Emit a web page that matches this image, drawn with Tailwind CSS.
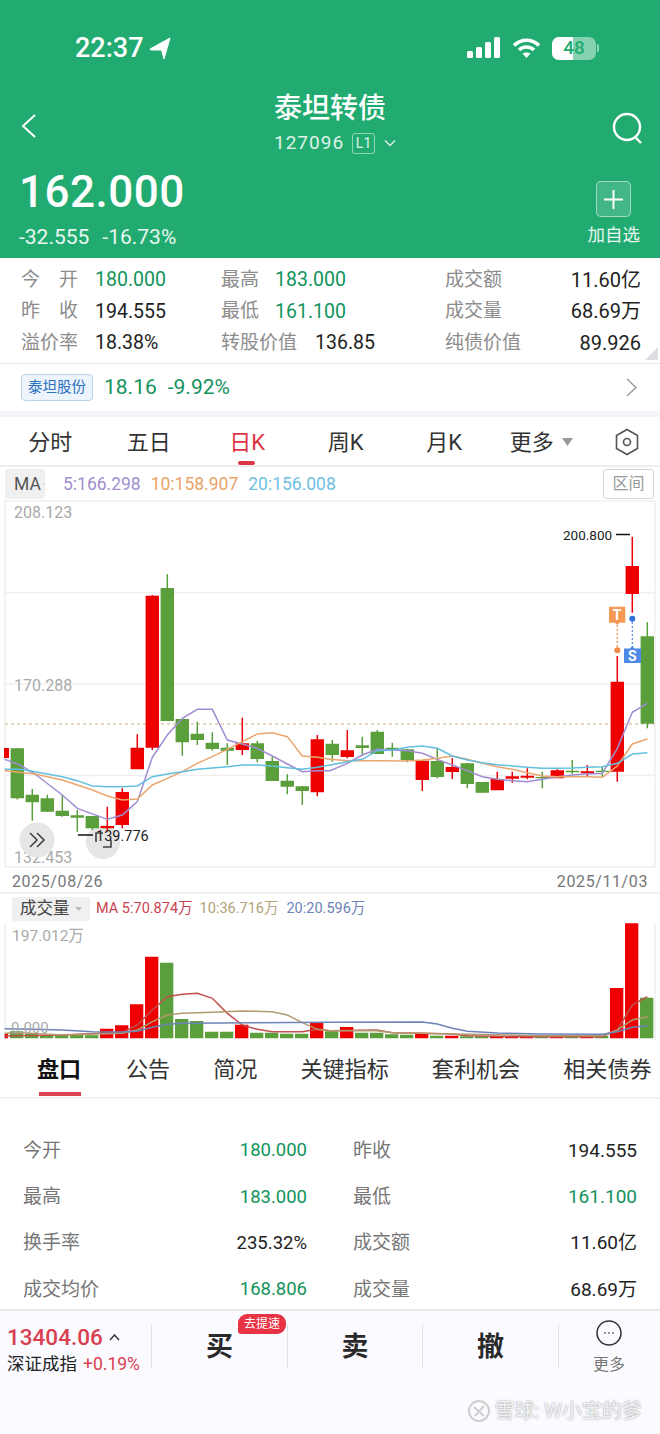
<!doctype html>
<html lang="zh">
<head>
<meta charset="utf-8">
<title>泰坦转债</title>
<script src="https://cdn.jsdelivr.net/npm/@tailwindcss/browser@4"></script>
</head>
<body class="bg-white">
<div class="relative w-[660px] h-[1434px] overflow-hidden flex flex-col bg-white text-[#222] font-['Roboto','Noto_Sans_CJK_SC',sans-serif]">

  <!-- green header -->
  <header class="h-[258px] shrink-0 bg-[#21ab70] text-white flex flex-col">
    <div class="h-[97px] shrink-0 flex items-start justify-between pl-[75px] pr-[61px] pt-[33px]">
      <div class="flex items-center gap-[5px]">
        <span class="text-[27px] leading-[31px] font-medium">22:37</span>
        <svg width="22" height="23" viewBox="0 0 22 23"><path d="M1 12 21 1 15 22 12.500 13 2 13z" fill="#fff" stroke="#fff" stroke-width="1" stroke-linejoin="round"/></svg>
      </div>
      <div class="flex items-center gap-[11px] h-[30px] pl-[1px]">
        <svg width="34" height="22" viewBox="0 0 34 22" fill="#fff"><rect x="0" y="14" width="6" height="7" rx="1.500"/><rect x="9" y="10" width="6" height="11" rx="1.500"/><rect x="18" y="5" width="6" height="16" rx="1.500"/><rect x="27" y="0" width="6" height="21" rx="1.500"/></svg>
        <svg width="29" height="22" viewBox="0 0 29 22" fill="none" stroke="#fff" stroke-width="3.600"><path d="M2 8.500C9 1.500 20 1.500 27 8.500"/><path d="M7 13C11 9 18 9 22 13"/><path d="M14.500 21 10.500 16.500C12.500 15 16.500 15 18.500 16.500z" fill="#fff" stroke="none"/></svg>
        <div class="relative w-[44px] h-[23px] rounded-[7px] bg-white/45 overflow-hidden flex">
          <div class="w-[21px] h-full bg-white"></div>
          <span class="absolute inset-0 flex items-center justify-center text-[19px] font-medium text-[#21ab70]">48</span>
        </div>
        <div class="-ml-[10px] w-[2px] h-[8px] rounded-r bg-white/50"></div>
      </div>
    </div>
    <div class="h-[62px] shrink-0 relative flex flex-col items-start pl-[274px] -mt-[6px]">
      <div class="text-[28px] leading-[36px] font-medium">泰坦转债</div>
      <div class="flex items-center h-[26px] mt-[3px]">
        <span class="text-[19px] tracking-[1px] text-white/85">127096</span>
        <span class="ml-[8px] w-[23px] h-[21px] rounded-[3px] border border-white/50 text-[14px] leading-[19px] text-center text-white/85">L1</span>
        <svg class="ml-[9px]" width="12" height="8" viewBox="0 0 12 8" fill="none" stroke="#fff" stroke-opacity=".85" stroke-width="1.400"><path d="M1 1.500 6 6.500 11 1.500"/></svg>
      </div>
      <svg class="absolute left-[20px] top-[22px]" width="17" height="26" viewBox="0 0 17 26" fill="none" stroke="#fff" stroke-width="2"><path d="M15 2 3 13 15 24"/></svg>
      <svg class="absolute left-[612px] top-[21px]" width="31" height="33" viewBox="0 0 31 33" fill="none" stroke="#fff" stroke-width="2.400"><circle cx="15" cy="15" r="13"/><path d="M23 25 29 31"/></svg>
    </div>
    <div class="flex-1 flex justify-between pl-[19px] pr-[20px] mt-[11px]">
      <div class="flex flex-col">
        <div class="text-[44px] leading-[56px] font-medium tracking-[0.5px]">162.000</div>
        <div class="flex gap-[13px] text-[21px] leading-[24px] mt-[5px] text-white/90"><span>-32.555</span><span>-16.73%</span></div>
      </div>
      <div class="flex flex-col items-center pt-[17px]">
        <div class="w-[35px] h-[36px] rounded-[5px] border border-white/50 bg-white/15 flex items-center justify-center">
          <svg width="19" height="19" viewBox="0 0 19 19" stroke="#fff" stroke-width="2"><path d="M0 9.500H19M9.500 0V19"/></svg>
        </div>
        <div class="text-[17.500px] leading-[24px] mt-[6px] text-white/90">加自选</div>
      </div>
    </div>
  </header>

  <!-- quote summary -->
  <section class="relative h-[106px] shrink-0 border-b border-[#e8e8ec] pl-[21px] pr-[19px] pt-[6px] flex text-[#222]">
    <div class="w-[200px] flex flex-col">
      <div class="h-[31.500px] flex items-center"><span class="w-[74px] pr-[17px] flex justify-between text-[19px] text-[#8c8c8c]"><span>今</span><span>开</span></span><span class="text-[19.500px] text-[#12935c]">180.000</span></div>
      <div class="h-[31.500px] flex items-center"><span class="w-[74px] pr-[17px] flex justify-between text-[19px] text-[#8c8c8c]"><span>昨</span><span>收</span></span><span class="text-[19.500px]">194.555</span></div>
      <div class="h-[31.500px] flex items-center"><span class="w-[74px] text-[19px] text-[#8c8c8c]">溢价率</span><span class="text-[19.500px]">18.38%</span></div>
    </div>
    <div class="w-[224px] flex flex-col">
      <div class="h-[31.500px] flex items-center"><span class="w-[54px] text-[19px] text-[#8c8c8c]">最高</span><span class="text-[19.500px] text-[#12935c]">183.000</span></div>
      <div class="h-[31.500px] flex items-center"><span class="w-[54px] text-[19px] text-[#8c8c8c]">最低</span><span class="text-[19.500px] text-[#12935c]">161.100</span></div>
      <div class="h-[31.500px] flex items-center"><span class="w-[94px] text-[19px] text-[#8c8c8c]">转股价值</span><span class="text-[19.500px]">136.85</span></div>
    </div>
    <div class="flex-1 flex flex-col">
      <div class="h-[31.500px] flex items-center justify-between"><span class="text-[19px] text-[#8c8c8c]">成交额</span><span class="text-[20px]">11.60亿</span></div>
      <div class="h-[31.500px] flex items-center justify-between"><span class="text-[19px] text-[#8c8c8c]">成交量</span><span class="text-[20px]">68.69万</span></div>
      <div class="h-[31.500px] flex items-center justify-between"><span class="text-[19px] text-[#8c8c8c]">纯债价值</span><span class="text-[20px]">89.926</span></div>
    </div>
    <svg class="absolute right-[2px] bottom-[3px]" width="13" height="13" viewBox="0 0 13 13"><path d="M13 0V13H0z" fill="#dcdce2"/></svg>
  </section>

  <!-- related stock -->
  <section class="h-[47px] shrink-0 flex items-center pl-[21px] pr-[23px]">
    <span class="w-[72px] h-[27px] rounded-[4px] border border-[#bcd3ea] bg-[#edf4fb] text-[#2a70c0] text-[14.500px] leading-[25px] text-center">泰坦股份</span>
    <span class="ml-[11px] text-[21px] text-[#12935c]">18.16</span>
    <span class="ml-[11px] text-[21px] text-[#12935c]">-9.92%</span>
    <svg class="ml-auto" width="11" height="19" viewBox="0 0 11 19" fill="none" stroke="#9a9a9a" stroke-width="1.400"><path d="M1 1 10 9.500 1 18"/></svg>
  </section>
  <div class="h-[6px] shrink-0 bg-[#f5f5f9]"></div>

  <!-- period tabs -->
  <nav class="relative h-[50px] shrink-0 border-b-2 border-[#eeeeee] flex items-center pl-[1px] pt-[2px] text-[22px] text-[#333]">
    <span class="w-[98.500px] text-center">分时</span>
    <span class="w-[98.500px] text-center">五日</span>
    <span class="w-[98.500px] text-center text-[#dc3545]">日K</span>
    <span class="w-[98.500px] text-center">周K</span>
    <span class="w-[98.500px] text-center">月K</span>
    <span class="w-[98.500px] flex items-center justify-center gap-[8px] pr-[3px]">更多<svg width="11" height="8" viewBox="0 0 11 8"><path d="M0 0H11L5.500 8z" fill="#999"/></svg></span>
    <svg class="ml-[23px]" width="24" height="28" viewBox="0 0 24 28" fill="none" stroke="#555" stroke-width="1.600"><path d="M12 1.500 22.500 7.500V20.500L12 26.500 1.500 20.500V7.500z"/><circle cx="12" cy="14" r="3.500"/></svg>
    <span class="absolute left-[238px] bottom-0 w-[17px] h-[4px] rounded-full bg-[#dc3545]"></span>
  </nav>

  <!-- MA legend -->
  <div class="h-[33px] shrink-0 flex items-center pl-[5px] pr-[6px] pt-[1px] text-[17.500px]">
    <span class="w-[40px] h-[30px] bg-[#f0f0f0] rounded-[2px] flex items-center pl-[9px] gap-[2px] text-[#555]">MA<svg width="7" height="4" viewBox="0 0 7 4"><path d="M0 0H7L3.500 4z" fill="#aaa"/></svg></span>
    <span class="ml-[18px] text-[#a18fd0]">5:166.298</span>
    <span class="ml-[10px] text-[#e9a368]">10:158.907</span>
    <span class="ml-[10px] text-[#6fbfe0]">20:156.008</span>
    <span class="ml-auto w-[51px] h-[30px] border border-[#d5d5d5] rounded-[3px] text-[16px] leading-[28px] text-center text-[#999]">区间</span>
  </div>

  <!-- K-line chart -->
  <svg class="block shrink-0" width="660" height="368" viewBox="0 500 660 368">
    <g stroke="#efefef" stroke-width="1.500" fill="none">
      <path d="M5 501H655M5 592.500H655M5 684H655M5 775.500H655M5 867H655"/>
      <path d="M5 501V867M655 501V867"/>
    </g>
    <path d="M5 724H655" stroke="#c9b28a" stroke-width="1.200" stroke-dasharray="3 3"/>
    <g font-size="16" fill="#aaaaaa">
      <text x="14" y="518">208.123</text>
      <text x="14" y="691">170.288</text>
      <text x="14" y="863">132.453</text>
    </g>
    <circle cx="37" cy="840" r="17.500" fill="#e6e6e6"/>
    <circle cx="103" cy="842" r="17" fill="#e6e6e6"/>
    <!-- wicks -->
    <path stroke="#e8000a" stroke-width="1.500" fill="none" d="M107.300 806.700V831.700M122.300 788.300V828.300M137.300 734.300V769M152.300 595V750M242.300 717.700V755M317.300 735V796.300M347.300 730V758.300M422.300 760V791M452.300 758.300V779M497.300 771.700V790M512.300 771.700V782.700M527.300 768.300V779.300M557.300 769.300V778M587.300 765V776M617.300 656V781.700M632.300 536.700V612.700"/>
    <path stroke="#5b9e3c" stroke-width="1.500" fill="none" d="M17.300 748V799.500M32.300 789V820.700M47.300 794.700V812M62.300 795.300V816.700M77.300 810V831.700M92.300 816V830M167.300 574.300V588M182.300 719V755.700M197.300 721.700V745M212.300 732.300V750.700M227.300 743.300V765M257.300 740.700V762.300M272.300 756.700V781M287.300 774.300V794.300M302.300 786V805M332.300 740V761.700M362.300 736.700V755M377.300 730V754M392.300 742.700V756.700M407.300 749V762.300M437.300 748.300V778.300M467.300 763V788.300M482.300 782V793M542.300 771.700V788.300M572.300 760V774M602.300 766.700V776.700M647.300 622.300V728.300"/>
    <!-- bodies -->
    <path fill="#ee0000" d="M4 748h5V758h-5zM100.600 826h13.400V828.300h-13.400zM115.600 792h13.400V825h-13.400zM130.600 747.700h13.400V769.300h-13.400zM145.600 595.700h13.400V747.700h-13.400zM235.600 743.300h13.400V750h-13.400zM310.600 739.300h13.400V792.300h-13.400zM340.600 750.300h13.400V757h-13.400zM415.600 760.700h13.400V780h-13.400zM445.600 767h13.400V772h-13.400zM490.600 779h13.400V790.300h-13.400zM505.600 776.300h13.400V778.700h-13.400zM520.600 775.700h13.400V777.700h-13.400zM550.600 770.300h13.400V778.300h-13.400zM580.600 771.300h13.400V773.300h-13.400zM610.600 681.700h13.400V771.700h-13.400zM625.600 566h13.400V594h-13.400z"/>
    <path fill="#5b9e3c" d="M10.600 748.300h13.400V798.300h-13.400zM25.600 794.700h13.400V802.300h-13.400zM40.600 798.300h13.400V811.700h-13.400zM55.600 810.700h13.400V816h-13.400zM70.600 815.300h13.400V817.700h-13.400zM85.600 816h13.400V828.300h-13.400zM160.600 588h13.400V721h-13.400zM175.600 719h13.400V742.300h-13.400zM190.600 733.700h13.400V740h-13.400zM205.600 742.700h13.400V749h-13.400zM220.600 747.700h13.400V750.700h-13.400zM250.600 743.300h13.400V759h-13.400zM265.600 761h13.400V781h-13.400zM280.600 780.700h13.400V786.700h-13.400zM295.600 786.300h13.400V791h-13.400zM325.600 743.700h13.400V755h-13.400zM355.600 745.300h13.400V748h-13.400zM370.600 731.700h13.400V754h-13.400zM385.600 747.700h13.400V750.700h-13.400zM400.600 749.300h13.400V760h-13.400zM430.600 761h13.400V777h-13.400zM460.600 763.300h13.400V784h-13.400zM475.600 782h13.400V792.700h-13.400zM535.600 777h13.400V778.300h-13.400zM565.600 770.700h13.400V772.300h-13.400zM595.600 770.700h13.400V772h-13.400zM640.600 636.300h13.400V723.700h-13.400z"/>
    <!-- moving averages -->
    <g transform="translate(0 500) scale(.33333)" fill="none" stroke-width="4.500">
      <polyline stroke="#a08cd2" points="14,778 60,795 105,822 187,885 232,925 322,958 367,945 412,905 457,772 502,705 547,655 592,628 637,628 682,720 727,732 772,745 817,768 862,792 907,815 952,812 990,812 1042,790 1087,765 1132,748 1177,750 1222,752 1267,760 1312,778 1357,795 1402,812 1447,830 1492,838 1537,842 1582,845 1627,838 1672,830 1717,825 1762,822 1807,820 1852,745 1897,637 1942,610"/>
      <polyline stroke="#eba66e" points="14,812 105,822 187,840 277,870 322,888 367,900 412,897 457,855 502,835 547,815 592,790 637,770 682,748 727,725 772,702 817,698 862,710 907,768 952,772 990,778 1042,782 1132,782 1222,783 1267,780 1312,775 1357,768 1402,778 1447,790 1492,800 1537,808 1582,818 1627,828 1672,830 1717,830 1762,830 1807,832 1852,798 1897,732 1942,717"/>
      <polyline stroke="#62bfdd" points="14,808 60,808 105,815 187,830 232,842 277,858 322,860 367,860 412,858 457,830 502,822 547,815 592,808 637,804 682,800 727,795 772,795 817,798 862,803 907,808 952,802 990,795 1042,785 1087,778 1132,752 1177,750 1222,742 1267,738 1312,745 1357,768 1402,780 1447,788 1492,794 1537,798 1582,802 1627,805 1672,805 1717,804 1762,802 1807,800 1852,790 1897,762 1942,758"/>
    </g>
    <!-- high / low labels -->
    <text x="563" y="540" font-size="13.500" fill="#222">200.800</text>
    <path d="M616 534.500H630" stroke="#111" stroke-width="1.500"/>
    <path d="M78 835H93" stroke="#111" stroke-width="1.500"/>
    <text x="96" y="841" font-size="14.500" fill="#222">139.776</text>
    <path d="M30 833 37 840 30 847M37 833 44 840 37 847" fill="none" stroke="#444" stroke-width="1.600"/>
    <path d="M96 842V833H103M103 847H111V840" fill="none" stroke="#444" stroke-width="1.600"/>
    <!-- T / S trade marks -->
    <path d="M617.300 625V650" stroke="#ee9a58" stroke-width="1.300" stroke-dasharray="2 2"/>
    <path d="M609 606.700H625.300V622.700H619.500L617.300 625 615 622.700H609z" fill="#f59a55"/>
    <text x="617.200" y="620" font-size="14" font-weight="700" fill="#fff" text-anchor="middle">T</text>
    <circle cx="617.300" cy="650.300" r="3" fill="#ee8a44"/>
    <path d="M632.300 622V645" stroke="#5b8fe0" stroke-width="1.300" stroke-dasharray="2 2"/>
    <path d="M624 648.500H630L632.300 645.500 634.500 648.500H641V663H624z" fill="#4f8ae8"/>
    <text x="632.300" y="661" font-size="14" font-weight="700" fill="#fff" text-anchor="middle">S</text>
    <circle cx="632.300" cy="618.700" r="3" fill="#2f6fd8"/>
  </svg>

  <!-- date axis -->
  <div class="h-[26px] shrink-0 flex items-center justify-between pl-[12px] pr-[12px] pt-[3px] border-b-2 border-[#f2f2f2] text-[16px] tracking-[0.6px] text-[#777]">
    <span>2025/08/26</span><span>2025/11/03</span>
  </div>

  <!-- volume legend -->
  <div class="h-[29px] shrink-0 flex items-center pl-[12px] pt-[1px] text-[14.500px]">
    <span class="w-[78px] h-[24px] bg-[#f0f0f0] rounded-[2px] flex items-center pl-[8px] gap-[5px] text-[16.500px] text-[#444]">成交量<svg width="7" height="4" viewBox="0 0 7 4"><path d="M0 0H7L3.500 4z" fill="#bbb"/></svg></span>
    <span class="ml-[6px] text-[#c8434f]">MA 5:70.874万</span>
    <span class="ml-[7px] text-[#b3a27a]">10:36.716万</span>
    <span class="ml-[8px] text-[#6d84b8]">20:20.596万</span>
  </div>

  <!-- volume chart -->
  <svg class="block shrink-0" width="660" height="117" viewBox="0 923 660 117">
    <path d="M5 923V1040M655 923V1040" stroke="#efefef" stroke-width="1.500"/>
    <text x="12" y="941" font-size="15.500" fill="#aaaaaa">197.012万</text>
    <g transform="translate(0 870) scale(.33333)">
      <path fill="#ee0000" d="M14 492h10V505h-10zM300 476h40V505h-40zM345 466h40V505h-40zM390 403h40V505h-40zM435 260h40V505h-40zM705 464h40V505h-40zM930 459h40V505h-40zM1020 471h40V505h-40zM1245 492h40V505h-40zM1335 497h40V505h-40zM1470 498h40V505h-40zM1515 499h40V505h-40zM1560 499h40V505h-40zM1650 499h40V505h-40zM1740 499h40V505h-40zM1830 354h40V505h-40zM1875 160h40V505h-40z"/>
      <path fill="#5b9e3c" d="M30 484h40V505h-40zM75 492h40V505h-40zM120 495h40V505h-40zM165 492h40V505h-40zM210 492h40V505h-40zM255 496h40V505h-40zM480 278h40V505h-40zM525 447h40V505h-40zM570 453h40V505h-40zM615 485h40V505h-40zM660 485h40V505h-40zM750 488h40V505h-40zM795 488h40V505h-40zM840 491h40V505h-40zM885 491h40V505h-40zM975 484h40V505h-40zM1065 488h40V505h-40zM1110 488h40V505h-40zM1155 493h40V505h-40zM1200 494h40V505h-40zM1290 497h40V505h-40zM1380 499h40V505h-40zM1425 499h40V505h-40zM1605 498h40V505h-40zM1695 499h40V505h-40zM1785 498h40V505h-40zM1920 383h40V505h-40z"/>
      <g fill="none" stroke-width="4.500">
        <polyline stroke="#c0504e" points="14,498 187,495 300,490 367,488 412,465 457,420 502,380 547,373 592,370 637,385 682,430 727,465 772,478 817,485 862,485 907,485 952,478 990,482 1130,480 1177,488 1267,490 1357,492 1402,497 1492,499 1627,500 1807,500 1852,480 1897,405 1942,380"/>
        <polyline stroke="#b39a6e" points="14,490 60,488 187,495 367,490 412,480 457,455 502,435 547,430 637,427 727,423 817,425 862,435 907,458 952,478 990,482 1130,482 1177,488 1402,493 1627,497 1807,497 1852,480 1897,450 1942,440"/>
        <polyline stroke="#6d84b8" points="14,476 100,478 187,480 277,485 367,486 412,484 457,472 502,463 547,460 990,457 1267,456 1312,462 1357,475 1402,484 1492,489 1627,492 1807,493 1852,485 1897,472 1942,467"/>
      </g>
    </g>
    <text x="11" y="1033" font-size="15" fill="#aaaaaa">0.000</text>
  </svg>

  <!-- detail tabs -->
  <nav class="relative h-[59px] shrink-0 border-b-2 border-[#f2f2f2] flex items-center gap-[43px] pl-[37px] pt-[3px] text-[22.100px] text-[#333]">
    <span class="w-[46px] font-bold text-[#111]">盘口</span>
    <span>公告</span><span>简况</span><span>关键指标</span><span>套利机会</span><span class="whitespace-nowrap">相关债券</span>
    <span class="absolute left-[39px] bottom-[1px] w-[42px] h-[4px] bg-[#dc4452]"></span>
  </nav>

  <!-- detail table -->
  <section class="h-[210px] shrink-0 pt-[29px] pl-[23px] pr-[23px] text-[19px]">
    <div class="h-[46.300px] flex items-center"><span class="w-[100px] text-[#777]">今开</span><span class="w-[184px] text-right text-[18.500px] text-[#12935c]">180.000</span><span class="ml-[46px] text-[#777]">昨收</span><span class="ml-auto">194.555</span></div>
    <div class="h-[46.300px] flex items-center"><span class="w-[100px] text-[#777]">最高</span><span class="w-[184px] text-right text-[18.500px] text-[#12935c]">183.000</span><span class="ml-[46px] text-[#777]">最低</span><span class="ml-auto text-[#12935c]">161.100</span></div>
    <div class="h-[46.300px] flex items-center"><span class="w-[100px] text-[#777]">换手率</span><span class="w-[184px] text-right text-[18.500px]">235.32%</span><span class="ml-[46px] text-[#777]">成交额</span><span class="ml-auto">11.60亿</span></div>
    <div class="h-[46.300px] flex items-center"><span class="w-[100px] text-[#777]">成交均价</span><span class="w-[184px] text-right text-[18.500px] text-[#12935c]">168.806</span><span class="ml-[46px] text-[#777]">成交量</span><span class="ml-auto">68.69万</span></div>
  </section>

  <!-- bottom bar -->
  <footer class="relative flex-1 border-t-2 border-[#e6e6e8] bg-[#fafaff] pt-[13px]">
    <div class="flex h-[44px] items-stretch">
      <div class="w-[152px] pl-[7px] border-r border-[#e3e3e6] whitespace-nowrap">
        <div class="flex items-center gap-[6px] h-[27px]"><span class="text-[22.500px] font-medium text-[#d9404f]">13404.06</span><svg width="11" height="7" viewBox="0 0 11 7" fill="none" stroke="#333" stroke-width="1.400"><path d="M1 6 5.500 1 10 6"/></svg></div>
        <div class="text-[17.500px] leading-[24px] mt-[1px] flex gap-[6px]"><span>深证成指</span><span class="text-[#d9404f]">+0.19%</span></div>
      </div>
      <div class="w-[136px] border-r border-[#e3e3e6] flex items-center justify-center pt-[3px] text-[27px] font-bold text-[#2a2a2a]">买</div>
      <div class="w-[135px] border-r border-[#e3e3e6] flex items-center justify-center pt-[3px] text-[27px] font-bold text-[#2a2a2a]">卖</div>
      <div class="w-[136px] border-r border-[#e3e3e6] flex items-center justify-center pt-[3px] text-[27px] font-bold text-[#2a2a2a]">撤</div>
      <div class="flex-1 flex flex-col items-center -mt-[4px] pr-[1px]">
        <svg class="shrink-0" width="26" height="26" viewBox="0 0 26 26" fill="none" stroke="#333" stroke-width="1.500"><circle cx="13" cy="13" r="12"/><path d="M8.500 13H9.500M12.500 13H13.500M16.500 13H17.500" stroke-width="2"/></svg>
        <span class="text-[16px] leading-[20px] mt-[9px] text-[#777]">更多</span>
      </div>
    </div>
    <span class="absolute left-[238px] top-[3px] w-[48px] h-[20px] rounded-t-[9px] rounded-br-[9px] rounded-bl-[3px] bg-[#e83344] text-white text-[12px] leading-[20px] text-center">去提速</span>
    <div class="absolute right-[18px] bottom-[8px] flex items-center gap-[3px] text-[20px] text-[#f2f2f5] [text-shadow:0_0_2px_#8e8e8e]">
      <svg width="24" height="24" viewBox="0 0 24 24" fill="none" stroke="#cfcfcf" stroke-width="2"><circle cx="12" cy="12" r="10"/><path d="M7 8 17 17M17 7 8 17"/></svg>
      <span>雪球: W小宝的爹</span>
    </div>
  </footer>
</div>
</body>
</html>
